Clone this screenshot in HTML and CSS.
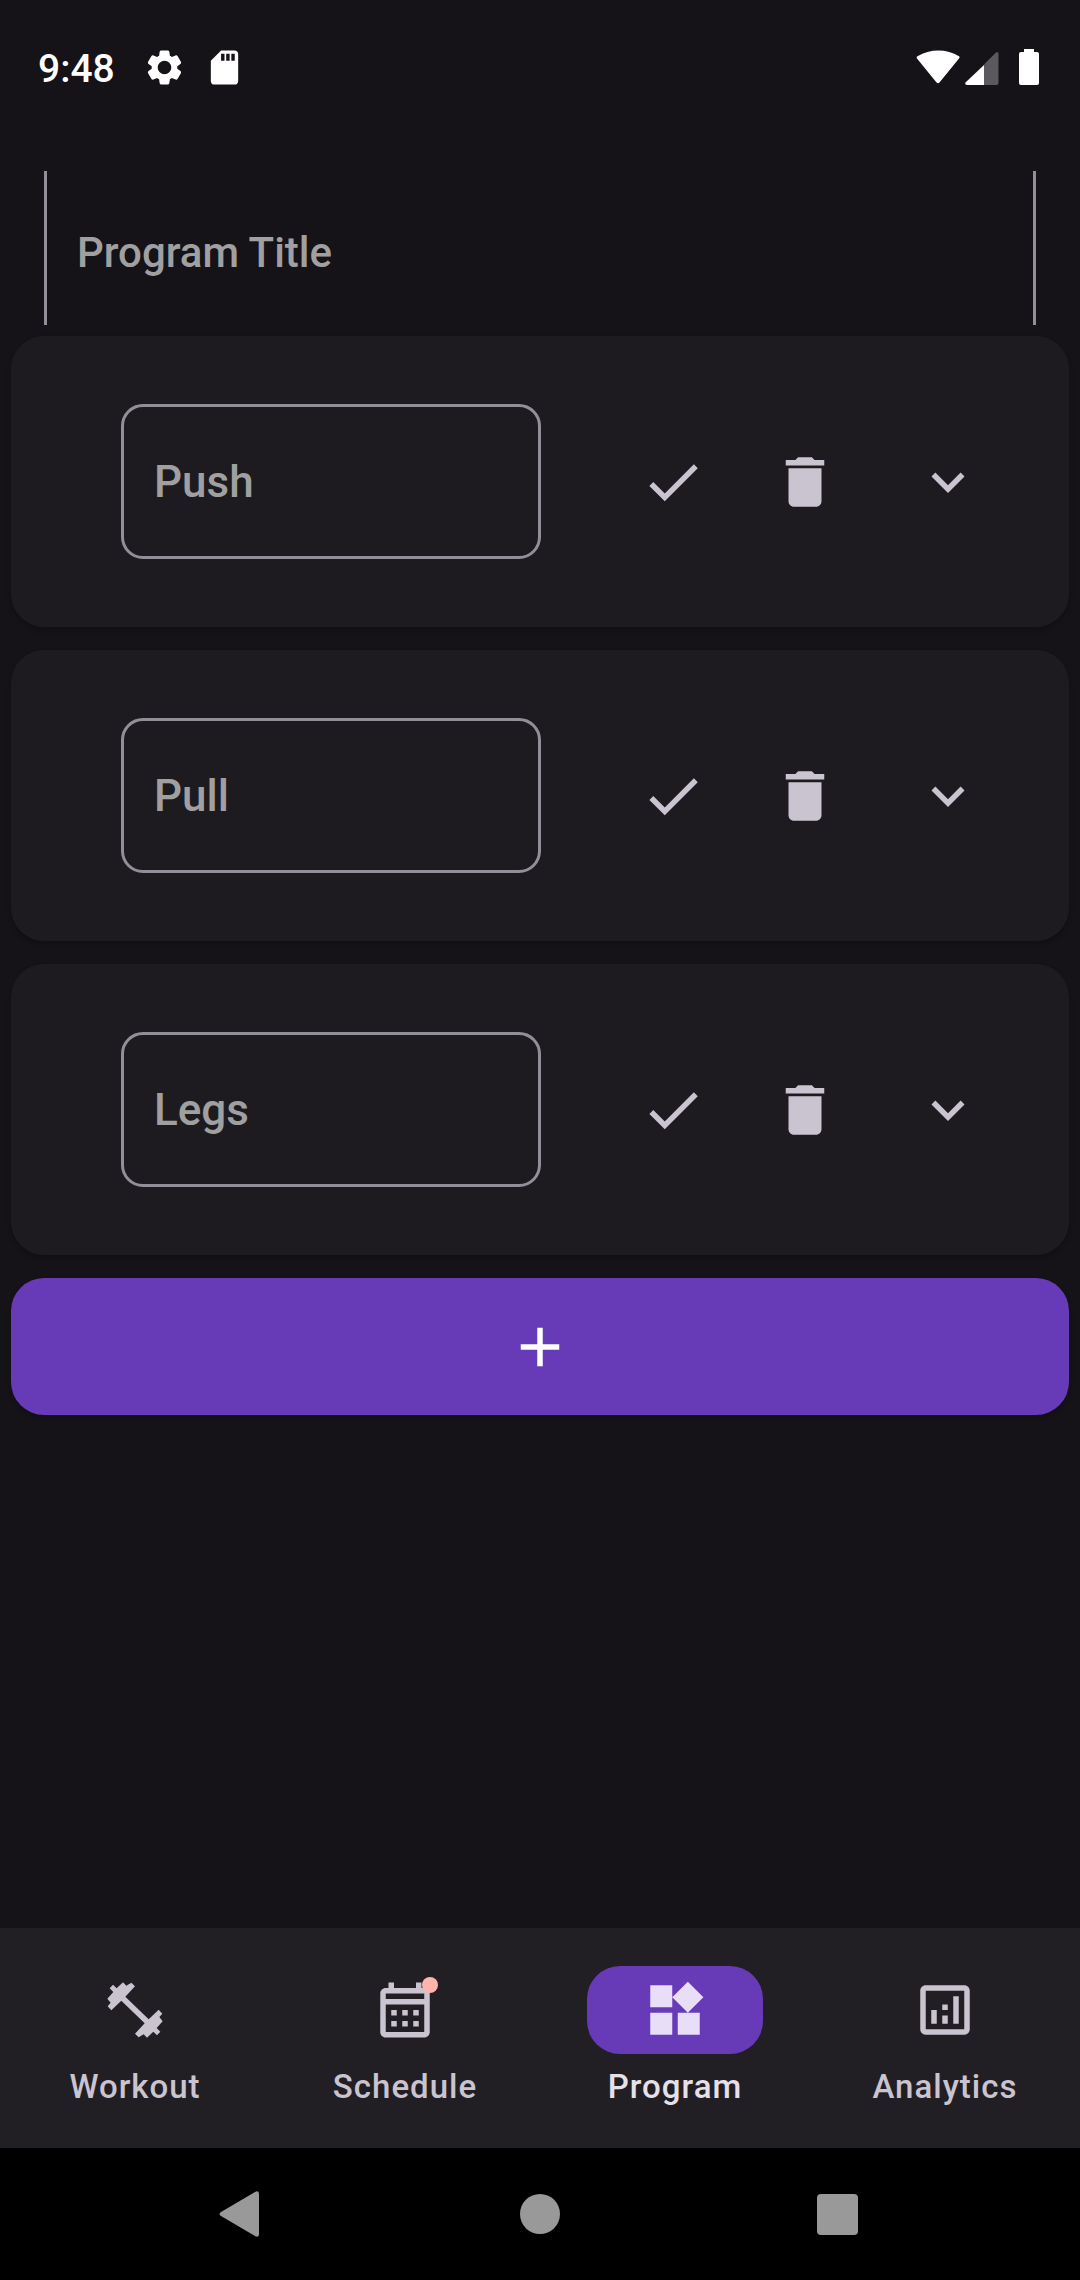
FILE: index.html
```html
<!DOCTYPE html>
<html lang="en">
<head>
<meta charset="utf-8">
<meta name="viewport" content="width=device-width, initial-scale=1">
<title>Program</title>
<link rel="stylesheet" href="styles.css">
</head>
<body>
<svg class="sprite">
  <symbol id="check" viewBox="0 0 24 24"><path d="M9 16.17 4.83 12l-1.42 1.41L9 19 21 7l-1.41-1.41z"/></symbol>
  <symbol id="delete" viewBox="0 0 24 24"><path d="M6 19c0 1.1.9 2 2 2h8c1.1 0 2-.9 2-2V7H6v12zM19 4h-3.5l-1-1h-5l-1 1H5v2h14V4z"/></symbol>
  <symbol id="expand" viewBox="0 0 24 24"><path d="M16.59 8.59 12 13.17 7.41 8.59 6 10l6 6 6-6z"/></symbol>
</svg>
<div class="screen">
  <header class="status">
    <time class="clock">9:48</time>
    <div class="status-left">
      <svg class="status-icon" viewBox="0 0 24 24"><path d="M19.5 12c0-.23-.01-.45-.03-.68l1.86-1.41c.4-.3.51-.86.26-1.3l-1.87-3.23c-.25-.44-.79-.62-1.25-.42l-2.15.91c-.37-.26-.76-.49-1.17-.68l-.29-2.31C14.800 2.380 14.370 2 13.870 2h-3.730c-.51 0-.94.38-1 .88l-.29 2.310c-.41.19-.8.42-1.170.68l-2.150-.91c-.46-.2-1-.02-1.250.42L2.410 8.620c-.25.44-.14.990.26 1.300l1.860 1.410c-.02.22-.03.44-.03.67s.01.45.03.68l-1.860 1.410c-.4.3-.51.86-.26 1.300l1.870 3.230c.25.44.79.62 1.250.42l2.150-.91c.37.26.76.49 1.170.68l.29 2.310c.06.5.49.88.99.88h3.730c.5 0 .93-.38.99-.88l.29-2.310c.41-.19.8-.42 1.170-.68l2.150.91c.46.2 1 .02 1.250-.42l1.870-3.230c.25-.44.14-.99-.26-1.300l-1.860-1.410c.03-.23.04-.45.04-.68zM12 16a4 4 0 1 1 0-8 4 4 0 0 1 0 8z"/></svg>
      <svg class="status-icon" viewBox="0 0 24 24"><path d="M18 2h-8L4 8v12c0 1.100.9 2 2 2h12c1.100 0 2-.9 2-2V4c0-1.100-.9-2-2-2zm-6 6h-2V4h2v4zm3 0h-2V4h2v4zm3 0h-2V4h2v4z"/></svg>
    </div>
    <svg class="status-right" viewBox="0 0 124 36"><path d="M1.500 7.200C14-.5 31-.5 43 7.200q1 .8.200 2L23.500 33.400q-1.500 1.500-3 0L.8 9.200q-.6-1.200.7-2z"/><path opacity=".3" d="M68 15.500 79.500 4q3-2.500 3 1v29q0 2-2 2H68z"/><path d="M68 16v20H51q-2.500-.5-1.500-2.500z"/><path d="M108 0h10v3h3q2 0 2 2v29q0 2-2 2h-16q-2 0-2-2V5q0-2 2-2h3z"/></svg>
  </header>

  <main class="content">
    <input class="title-field" type="text" aria-label="Program Title" placeholder="Program Title">

    <section class="card">
      <input class="day-field" type="text" aria-label="Day name" value="Push">
      <button class="icon-button" aria-label="Save"><svg class="icon"><use href="#check"/></svg></button>
      <button class="icon-button" aria-label="Delete"><svg class="icon"><use href="#delete"/></svg></button>
      <button class="expand-button" aria-label="Expand"><svg class="icon"><use href="#expand"/></svg></button>
    </section>
    <section class="card">
      <input class="day-field" type="text" aria-label="Day name" value="Pull">
      <button class="icon-button" aria-label="Save"><svg class="icon"><use href="#check"/></svg></button>
      <button class="icon-button" aria-label="Delete"><svg class="icon"><use href="#delete"/></svg></button>
      <button class="expand-button" aria-label="Expand"><svg class="icon"><use href="#expand"/></svg></button>
    </section>
    <section class="card">
      <input class="day-field" type="text" aria-label="Day name" value="Legs">
      <button class="icon-button" aria-label="Save"><svg class="icon"><use href="#check"/></svg></button>
      <button class="icon-button" aria-label="Delete"><svg class="icon"><use href="#delete"/></svg></button>
      <button class="expand-button" aria-label="Expand"><svg class="icon"><use href="#expand"/></svg></button>
    </section>

    <button class="add-button" aria-label="Add day"><svg class="icon" viewBox="0 0 24 24"><path d="M19 13h-6v6h-2v-6H5v-2h6V5h2v6h6v2z"/></svg></button>
  </main>

  <nav class="tabs">
    <a class="tab" href="#workout">
      <span class="tab-icon"><svg class="icon" viewBox="6 6 198 198"><path d="M39 29 50 40 69 22 79 32 94 23 105 34 76 65 146 133 176 104 187 116 178 126 188 139 170 159 181 170 171 181 160 170 141 188 131 178 116 187 105 176 134 145 64 77 34 106 23 94 32 83 22 71 40 51 29 40z"/></svg></span>
      <span>Workout</span>
    </a>
    <a class="tab" href="#schedule">
      <span class="tab-icon"><span class="badged"><svg class="icon" viewBox="0 0 24 24"><path d="M19 4h-1V2h-2v2H8V2H6v2H5c-1.110 0-1.990.9-1.990 2L3 20c0 1.100.89 2 2 2h14c1.100 0 2-.9 2-2V6c0-1.100-.9-2-2-2zm0 16H5V10h14v10zm0-12H5V6h14v2zM9 14H7v-2h2v2zm4 0h-2v-2h2v2zm4 0h-2v-2h2v2zm-8 4H7v-2h2v2zm4 0h-2v-2h2v2zm4 0h-2v-2h2v2z"/></svg><span class="badge"></span></span></span>
      <span>Schedule</span>
    </a>
    <a class="tab active" href="#program" aria-current="page">
      <span class="tab-icon"><svg class="icon" viewBox="0 0 24 24"><path d="M13 13v8h8v-8h-8zM3 21h8v-8H3v8zM3 3v8h8V3H3zm13.660-1.310L11 7.340 16.660 13l5.660-5.660-5.660-5.650z"/></svg></span>
      <span>Program</span>
    </a>
    <a class="tab" href="#analytics">
      <span class="tab-icon"><svg class="icon" viewBox="0 0 24 24"><path d="M19 3H5c-1.100 0-2 .9-2 2v14c0 1.100.9 2 2 2h14c1.100 0 2-.9 2-2V5c0-1.100-.9-2-2-2zm0 16H5V5h14v14zM7 12h2v5H7zm8-5h2v10h-2zm-4 7h2v3h-2zm0-4h2v2h-2z"/></svg></span>
      <span>Analytics</span>
    </a>
  </nav>

  <footer class="system-nav">
    <button class="system-button" aria-label="Back"><svg class="system-icon" viewBox="0 0 48 48"><path d="M4 22 38 2q4-2 4 2v40q0 4-4 2L4 26q-3-2 0-4z"/></svg></button>
    <button class="system-button" aria-label="Home"><svg class="system-icon" viewBox="0 0 48 48"><circle cx="24" cy="24" r="20"/></svg></button>
    <button class="system-button" aria-label="Recent apps"><svg class="system-icon" viewBox="0 0 48 48"><rect x="2" y="4" width="41" height="41" rx="4"/></svg></button>
  </footer>
</div>
</body>
</html>
```
FILE: styles.css
```css
* {
  box-sizing: border-box;
}

body {
  margin: 0;
  background: #151218;
  color: #cac4d0;
  font-family: Roboto, "Liberation Sans", sans-serif;
  font-weight: 500;
}

button {
  display: flex;
  align-items: center;
  justify-content: center;
  padding: 0;
  border: 0;
  background: none;
  color: inherit;
  font: inherit;
  cursor: pointer;
}

input {
  min-width: 0;
  outline: 0;
  background: none;
  color: #a0a0a1;
  font: inherit;
}

svg {
  display: block;
  fill: currentColor;
}

.sprite {
  display: none;
}

.screen {
  display: flex;
  flex-direction: column;
  min-height: 100vh;
}

.status {
  display: flex;
  align-items: center;
  height: 134px;
  padding: 0 40px 0 38px;
  color: #fff;
}

.clock {
  padding-top: 4px;
  font-size: 39px;
  line-height: 48px;
}

.status-left {
  display: flex;
  gap: 19px;
  margin-left: 29px;
}

.status-icon {
  width: 41px;
  height: 41px;
}

.status-right {
  width: 124px;
  height: 36px;
  margin-left: auto;
}

.content {
  display: flex;
  flex: 1;
  flex-direction: column;
  padding: 37px 11px 23px;
}

.title-field {
  height: 154px;
  margin: 0 33px 11px;
  padding: 8px 30px 0;
  border: solid #938f99;
  border-width: 0 3px;
  font-size: 42px;
}

.title-field::placeholder {
  color: inherit;
  opacity: 1;
}

.card {
  display: flex;
  align-items: center;
  margin-bottom: 23px;
  padding: 68px 88px 68px 110px;
  border-radius: 33px;
  background: #1d1b20;
  box-shadow: 0 3px 5px rgba(0, 0, 0, 0.2);
}

.day-field {
  flex: 1;
  height: 155px;
  margin-right: 66px;
  padding: 0 30px;
  border: 3px solid #938f99;
  border-radius: 22px;
  font-size: 44px;
}

.icon {
  width: 66px;
  height: 66px;
}

.icon-button {
  width: 132px;
  height: 132px;
}

.expand-button {
  height: 132px;
  margin-left: 44px;
}

.add-button {
  height: 137px;
  border-radius: 33px;
  background: #673ab7;
  box-shadow: 0 3px 5px rgba(0, 0, 0, 0.2);
  color: #fff;
}

.tabs {
  display: grid;
  grid-template-columns: repeat(4, 1fr);
  height: 220px;
  padding-top: 38px;
  background: #211f24;
}

.tab {
  display: flex;
  flex-direction: column;
  align-items: center;
  gap: 11px;
  color: #cac4d0;
  font-size: 33px;
  line-height: 44px;
  letter-spacing: 1px;
  text-decoration: none;
}

.tab-icon {
  display: grid;
  place-items: center;
  width: 176px;
  height: 88px;
  border-radius: 33px;
}

.active {
  color: #e6e0e9;
}

.active .tab-icon {
  background: #673ab7;
  color: #e8def8;
}

.badged {
  position: relative;
}

.badge {
  position: absolute;
  top: 0;
  right: 0;
  width: 16px;
  height: 16px;
  border-radius: 50%;
  background: #ffb4ab;
}

.system-nav {
  display: flex;
  justify-content: center;
  gap: 167px;
  background: #000;
  color: #999;
}

.system-button {
  width: 132px;
  height: 132px;
}

.system-icon {
  width: 48px;
  height: 48px;
}
```
